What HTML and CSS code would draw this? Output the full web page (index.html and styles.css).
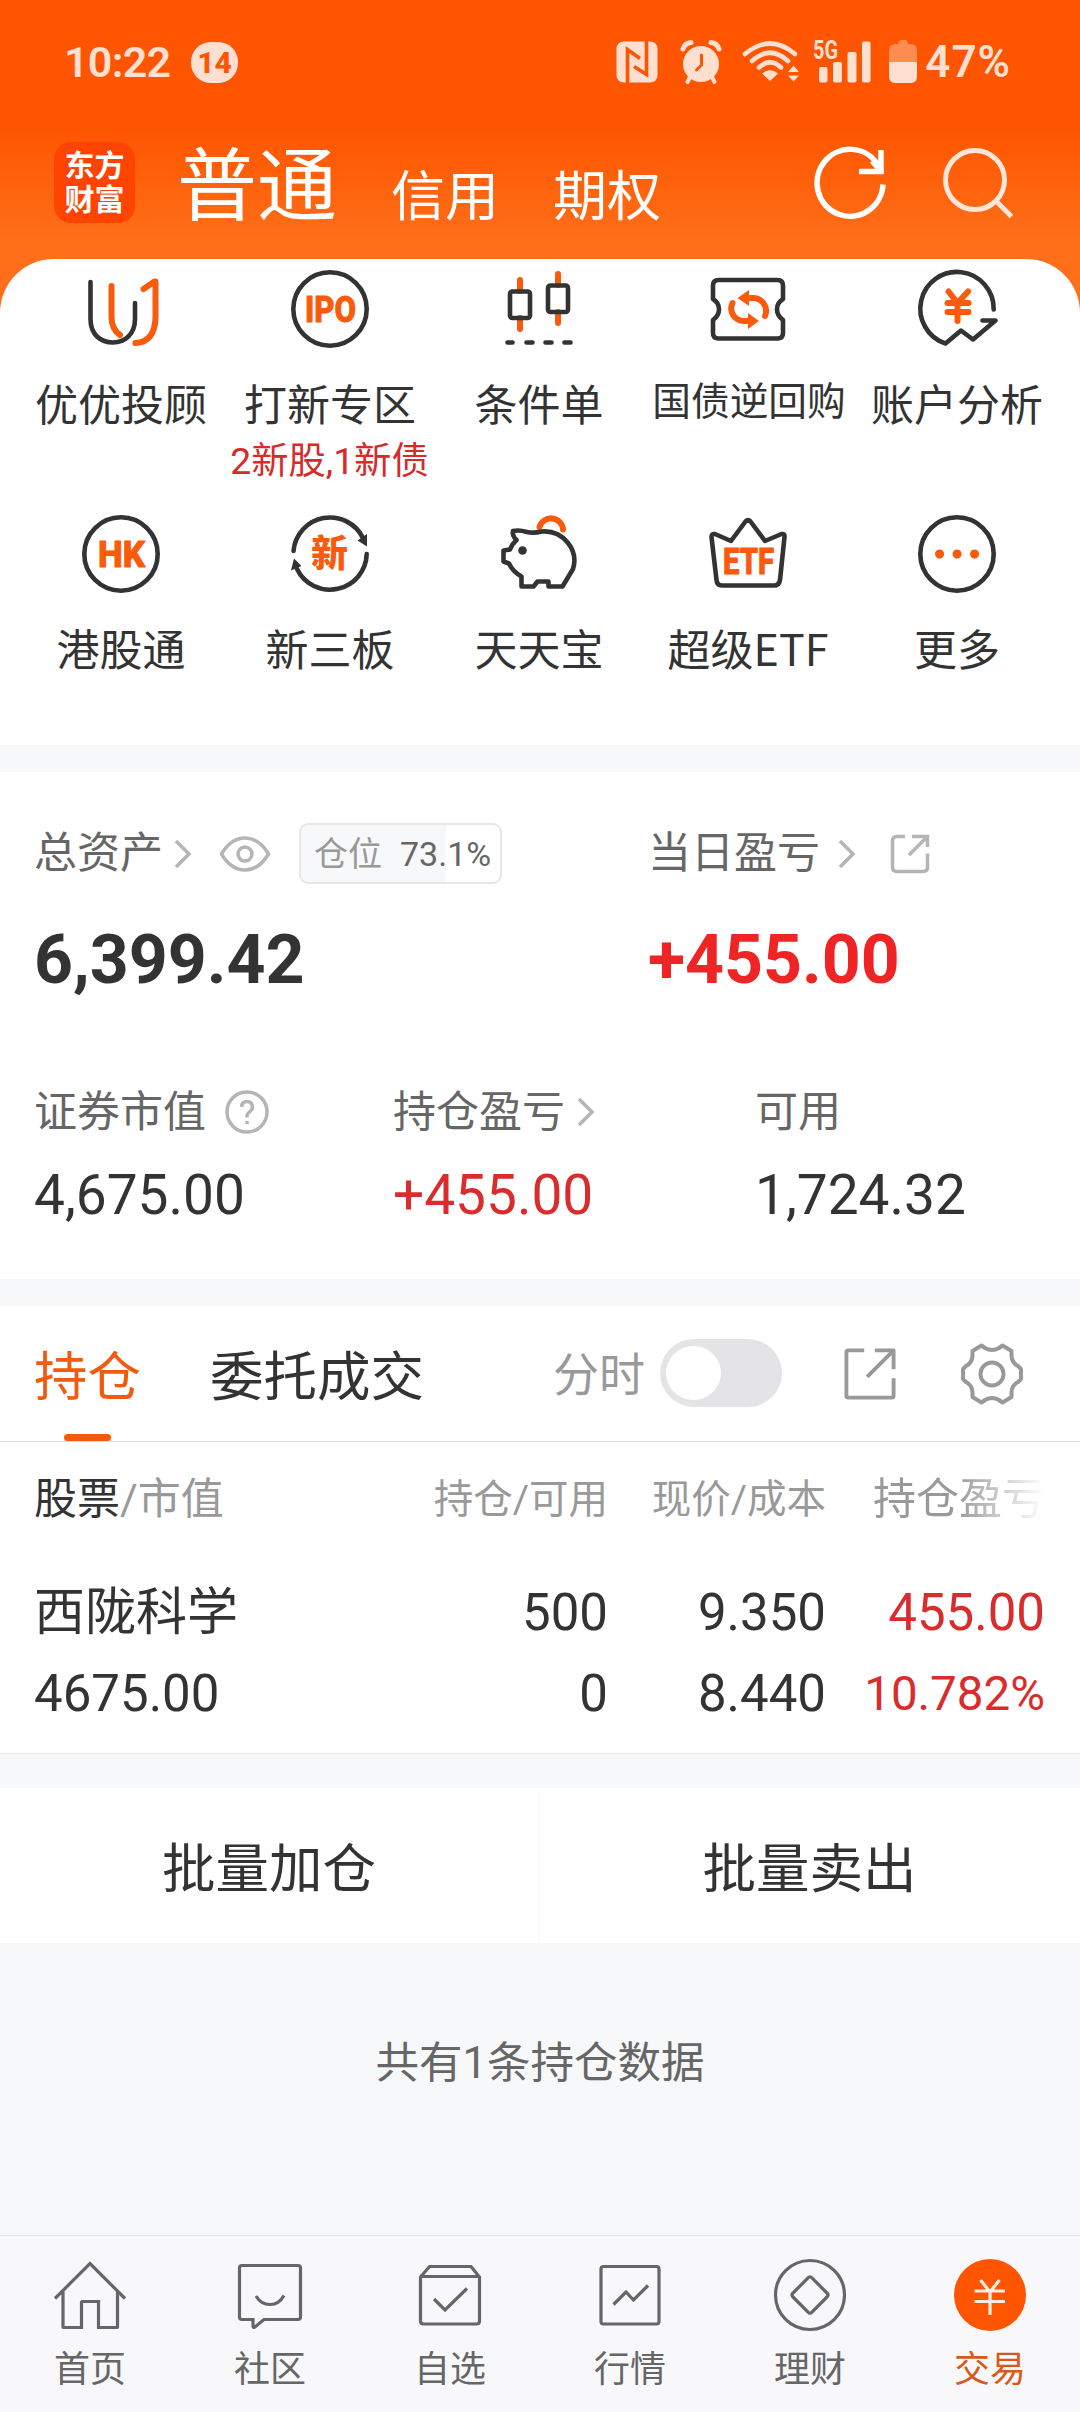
FILE: index.html
```html
<!DOCTYPE html>
<html lang="zh-CN">
  <head>
    <meta charset="UTF-8" />
    <meta name="viewport" content="width=device-width, initial-scale=1.0" />
    <title>交易</title>
    <link rel="stylesheet" href="styles.css">
  </head>

  <body>
    <div class="top">
      <div class="status">
        <span class="time">10:22</span>
        <span class="count">14</span>
        <div class="status-icons">
          <svg class="nfc" width="42" height="42" viewBox="0 0 42 42">
            <rect x="0.5" y="0.5" width="41" height="41" rx="7" fill="#ffdfd0" />
            <path d="M11.5 42V8.5L24 17.5M30.5 0V33.5L18 25.500" fill="none" stroke="#ff5500" stroke-width="3.6" />
          </svg>
          <svg class="alarm" width="42" height="44" viewBox="0 0 42 44">
            <circle cx="21" cy="24" r="18" fill="#ffdfd0" />
            <path d="M3 9Q5 3 11 2.500M39 9Q37 3 31 2.500" fill="none" stroke="#ffdfd0" stroke-width="5" stroke-linecap="round" />
            <path d="M10 37L7.500 42M32 37L34.500 42" stroke="#ffdfd0" stroke-width="4" stroke-linecap="round" />
            <path d="M21.500 15V25L16.500 30" fill="none" stroke="#ff5500" stroke-width="3" stroke-linecap="round" />
          </svg>
          <svg class="wifi" width="58" height="44" viewBox="0 0 58 44">
            <g fill="none" stroke="#ffdfd0" stroke-width="4.600" stroke-linecap="round">
              <path d="M3 14Q28 -7 53 14" />
              <path d="M10 21Q28 4.500 46 21" />
              <path d="M17 27.500Q28 17 39 27.500" />
            </g>
            <path d="M20 33.500Q28 27 36 33.500L28 41Z" fill="#ffdfd0" />
            <path d="M46 32L51.500 25.500L57 32ZM46 35.500L51.500 41.500L57 35.500Z" fill="#ffdfd0" />
          </svg>
          <svg class="signal" width="60" height="44" viewBox="0 0 60 44">
            <text x="0" y="19" class="g5" textLength="25" lengthAdjust="spacingAndGlyphs">5G</text>
            <g fill="#ffdfd0">
              <rect x="6" y="27" width="8.500" height="15.500" rx="2" />
              <rect x="20" y="22" width="9" height="20.500" rx="2" />
              <rect x="34.500" y="12" width="9" height="30.500" rx="2" />
              <rect x="49" y="1.500" width="8.500" height="41" rx="2" />
            </g>
          </svg>
          <svg class="battery" width="28" height="44" viewBox="0 0 28 44">
            <path d="M0 23V11Q0 4 6 4H9Q9 0 13 0H15Q19 0 19 4H22Q28 4 28 11V23Z" fill="#ff8c50" />
            <path d="M0 22H28V36Q28 43 22 43H6Q0 43 0 36Z" fill="#ffdfd0" />
          </svg>
          <span class="percent">47%</span>
        </div>
      </div>

      <header>
        <div class="logo"><span>东方</span><span>财富</span></div>
        <nav class="accounts">
          <a class="current">普通</a>
          <a>信用</a>
          <a>期权</a>
        </nav>
        <svg class="refresh" width="76" height="76" viewBox="0 0 76 76" fill="none" stroke="#fff" stroke-width="5.500">
          <path d="M71 38.500A33 33.500 0 1 1 66 19" />
          <path d="M69 4V25.500H47M69 25L60 15" />
        </svg>
        <svg class="search" width="76" height="76" viewBox="0 0 76 76" fill="none" stroke="#ffe6d8" stroke-width="5">
          <circle cx="35" cy="34" r="29.500" />
          <path d="M56 55L71.500 70.500" />
        </svg>
      </header>

      <!-- genveje -->
      <section class="shortcuts">
        <a>
          <svg width="84" height="84" viewBox="0 0 84 84">
            <path class="dark" d="M11.500 15V52C11.500 68 22 75.500 34 75.500C46 75.500 56 67 56 52V36" />
            <path class="hot" d="M32.500 19V50Q32.500 62 41 68" />
            <path class="hot" d="M64.500 22L75.500 14.500H76.500V50Q76 75 56.500 76" />
          </svg>
          <span>优优投顾</span>
        </a>
        <a>
          <svg width="84" height="84" viewBox="0 0 84 84">
            <circle class="dark" cx="42" cy="42" r="36.700" />
            <text x="17" y="54.500" class="label" textLength="51" lengthAdjust="spacingAndGlyphs">IPO</text>
          </svg>
          <span>打新专区</span>
          <small>2新股,1新债</small>
        </a>
        <a>
          <svg width="84" height="84" viewBox="0 0 84 84">
            <path class="hot" d="M23 13V24M23 51V62M61 7V18M61 45V56" />
            <rect class="dark" x="13" y="24.500" width="20" height="26.500" rx="2.500" />
            <rect class="dark" x="51" y="18.500" width="20" height="26.500" rx="2.500" />
            <path class="dark" d="M10.500 75.500H15.500M29.500 75.500H35.500M48.500 75.500H54.500M67.500 75.500H73.500" />
          </svg>
          <span>条件单</span>
        </a>
        <a>
          <svg width="84" height="84" viewBox="0 0 84 84">
            <path class="dark" d="M12.500 13H71.500Q77 13 77 18.500V32C69 37 69 47 77 53V66Q77 71.500 71.500 71.500H12.500Q7 71.500 7 66V53C15 47 15 37 7 32V18.500Q7 13 12.500 13Z" />
            <path class="hot" d="M59 49C63 39 55 31 47 31H41M26.500 36C22 46 30 54 38 54H43" />
            <path class="tip" d="M31.500 31L43 23V39ZM53 54L42 46V62Z" />
          </svg>
          <span class="tight">国债逆回购</span>
        </a>
        <a>
          <svg width="84" height="84" viewBox="0 0 84 84">
            <path class="dark" d="M78.700 42.500A36.700 36.700 0 1 0 30.500 76.500L46 63.500L58 72.500L80.500 53.500H67.500" />
            <path class="hot" d="M33.500 24.500L42.500 36L53 24.500M32.500 36H53.500M32.500 45H53.500M42.500 36V54" />
          </svg>
          <span>账户分析</span>
        </a>
        <a>
          <svg width="84" height="84" viewBox="0 0 84 84">
            <circle class="dark" cx="42" cy="42" r="36.700" />
            <text x="19" y="54.500" class="label" textLength="47" lengthAdjust="spacingAndGlyphs">HK</text>
          </svg>
          <span>港股通</span>
        </a>
        <a>
          <svg width="84" height="84" viewBox="0 0 84 84">
            <path class="dark" d="M5.500 39A36.700 36.700 0 0 1 75 26M78.700 42A36.700 36.700 0 0 1 9 57" />
            <path class="ink" d="M79 22L69.500 28.500L79 34.500ZM3 58.500L6 46.500L13.500 54Z" />
            <text x="23" y="55" class="xin">新</text>
          </svg>
          <span>新三板</span>
        </a>
        <a>
          <svg width="84" height="84" viewBox="0 0 84 84">
            <path class="hot" d="M42.500 15A12 12 0 0 1 66 17.500" />
            <path class="dark" d="M30 20Q22 17.500 16 19Q15 24 19.500 28Q15 32 13 37.500L6.500 38.500V49.500L12 51.500Q16 60 24.500 64.500V74.500H36.500L40.500 69.500H51.500V74.500H65.500L76 57C82 38 66 18 45 19.500Q36 21.500 30 20Z" />
            <circle class="ink" cx="25.500" cy="38.500" r="4.300" />
          </svg>
          <span>天天宝</span>
        </a>
        <a>
          <svg width="84" height="84" viewBox="0 0 84 84">
            <path class="dark" d="M25 29L39.500 9.500Q42 7 44.500 9.500L59 29L75.500 22Q79 21.500 78.500 25L74 68Q73 73.500 68 73.500H16Q11 73.500 10.500 68L5.500 25Q5.500 21.500 9 22Z" />
            <text x="17" y="61.500" class="label" textLength="51" lengthAdjust="spacingAndGlyphs">ETF</text>
          </svg>
          <span class="noto">超级ETF</span>
        </a>
        <a>
          <svg width="84" height="84" viewBox="0 0 84 84">
            <circle class="dark" cx="42" cy="42" r="36.700" />
            <path class="tip" d="M24.500 37.500a4.500 4.500 0 1 0 .1 0ZM42 37.500a4.500 4.500 0 1 0 .1 0ZM59.500 37.500a4.500 4.500 0 1 0 .1 0Z" />
          </svg>
          <span>更多</span>
        </a>
      </section>
    </div>

    <section class="assets">
      <div class="totals">
        <div>
          <div class="title">
            <span>总资产</span>
            <svg class="chevron" width="18" height="30" viewBox="0 0 18 30"><path d="M2 2L15 15L2 28" /></svg>
            <svg class="eye" width="52" height="38" viewBox="0 0 52 38">
              <path d="M2.500 19Q12 3 26 3T49.500 19Q40 35 26 35T2.500 19Z" />
              <circle cx="26" cy="19" r="7" />
            </svg>
            <span class="position"><em>仓位</em>73.1%</span>
          </div>
          <strong>6,399.42</strong>
        </div>
        <div>
          <div class="title">
            <span>当日盈亏</span>
            <svg class="chevron far" width="18" height="30" viewBox="0 0 18 30"><path d="M2 2L15 15L2 28" /></svg>
            <svg class="share" width="40" height="40" viewBox="0 0 40 40">
              <path d="M15 2.500H7Q2.500 2.500 2.500 7V33Q2.500 37.500 7 37.500H33Q37.500 37.500 37.500 33V19.500M22 2.500H37.500V13M37 3L19 21" />
            </svg>
          </div>
          <strong class="up">+455.00</strong>
        </div>
      </div>
      <div class="details">
        <div>
          <p><span>证券市值</span>
            <svg class="help" width="44" height="44" viewBox="0 0 44 44">
              <circle cx="22" cy="22" r="20" />
              <path d="M16.500 17Q17 11.500 22 11.500T27.500 17Q27.500 19.500 24.500 22T22 26.500V27.500M22 31V34" />
            </svg>
          </p>
          <b>4,675.00</b>
        </div>
        <div>
          <p><span>持仓盈亏</span>
            <svg class="chevron near" width="18" height="30" viewBox="0 0 18 30"><path d="M2 2L15 15L2 28" /></svg>
          </p>
          <b class="up">+455.00</b>
        </div>
        <div>
          <p><span>可用</span></p>
          <b>1,724.32</b>
        </div>
      </div>
    </section>

    <section class="holdings">
      <div class="tabs">
        <a class="valgt">持仓</a>
        <a>委托成交</a>
        <span class="minute">分时</span>
        <span class="toggle"></span>
        <svg class="export" width="52" height="52" viewBox="0 0 54 54">
          <path d="M21 2.500H4.500Q2.500 2.500 2.500 4.500V49.500Q2.500 51.500 4.500 51.500H49.500Q51.500 51.500 51.500 49.500V31.500M32 2.500H51.500V22M51 3L24 30" />
        </svg>
        <svg class="gear" width="62" height="62" viewBox="0 0 62 62">
          <path d="M20.500 2.500L24 5Q31 9 38 5L41.500 2.500L50.500 8V13Q51 20 57 23L60 26V36L57 39Q51 42 50.500 49V54L41.500 59.500L38 57Q31 53 24 57L20.500 59.500L11.500 54V49Q11 42 5 39L2 36V26L5 23Q11 20 11.500 13V8Z" />
          <circle cx="31" cy="31" r="11.500" />
        </svg>
      </div>
      <div class="table">
        <div class="row head">
          <span><i>股票</i>/市值</span>
          <span class="small">持仓/可用</span>
          <span class="small">现价/成本</span>
          <span class="fade">持仓盈亏</span>
        </div>
        <div class="row first">
          <span>西陇科学</span>
          <span>500</span>
          <span>9.350</span>
          <span class="up">455.00</span>
        </div>
        <div class="row">
          <span>4675.00</span>
          <span>0</span>
          <span>8.440</span>
          <span class="up rate">10.782%</span>
        </div>
      </div>
    </section>

    <div class="batch">
      <button>批量加仓</button>
      <button>批量卖出</button>
    </div>

    <p class="total">共有1条持仓数据</p>

    <footer>
      <a>
        <svg width="80" height="80" viewBox="0 0 80 80">
          <path d="M5 43.500L40 8.500L75 43.500M13 36.500V71.500Q13 72.500 14 72.500H31.500V47.500Q31.500 46.500 32.500 46.500H48.500V72.500H66.500Q67.500 72.500 67.500 71.500V36.500" />
        </svg>
        首页
      </a>
      <a>
        <svg width="80" height="80" viewBox="0 0 80 80">
          <path d="M12 10.500H68Q70.500 10.500 70.500 13V62Q70.500 64.500 68 64.500H34L25 72Q23 73 23 71V64.500H12Q9.500 64.500 9.500 62V13Q9.500 10.500 12 10.500Z" />
          <path d="M26 41Q31 49.500 40 49.500T54 40.500" />
        </svg>
        社区
      </a>
      <a>
        <svg width="80" height="80" viewBox="0 0 80 80">
          <path d="M10.500 22L19.500 11.500H61L69.500 22V66Q69.500 69 66.500 69H13.500Q10.500 69 10.500 66ZM10.500 21.500H69.500M24 44L35 55L57 33.500" />
        </svg>
        自选
      </a>
      <a>
        <svg width="80" height="80" viewBox="0 0 80 80">
          <rect x="11" y="11.500" width="58" height="57.500" rx="2.500" />
          <path d="M23.500 49.500L36 37L43.500 45L58 30.500" />
        </svg>
        行情
      </a>
      <a>
        <svg width="80" height="80" viewBox="0 0 80 80">
          <circle cx="40" cy="40" r="34.500" />
          <path d="M38 23Q40 20.500 42 23L57 38Q59 40 57 42L42 57Q40 59.500 38 57L23 42Q21 40 23 38Z" />
        </svg>
        理财
      </a>
      <a class="active">
        <svg width="80" height="80" viewBox="0 0 80 80">
          <circle class="coin" cx="40" cy="40" r="36" />
          <path class="yen" d="M30.500 25L40 37L49.500 25M24.500 36H55M24.500 46.500H55M40 36V60" />
        </svg>
        交易
      </a>
    </footer>
  </body>
</html>
```

FILE: styles.css
```css
* {
  box-sizing: border-box;
}

body {
  margin: 0;
  width: 1080px;
  height: 2412px;
  display: flex;
  flex-direction: column;
  background-color: #f7f8fa;
  color: #333;
  font-family: Roboto, "Noto Sans CJK SC", sans-serif;
  font-size: 43px;
  font-weight: 400;
}

svg {
  flex: none;
  display: block;
  overflow: visible;
}

p {
  margin: 0;
}

/* orange top */
.top {
  background: linear-gradient(#ff5500 125px, #ff6f19 245px);
}

.status {
  height: 124px;
  padding: 38px 69px 38px 64px;
  display: flex;
  align-items: center;
  color: #ffdfd0;
}

.time {
  font-size: 43px;
  font-weight: 600;
  letter-spacing: -0.7px;
  width: 127px;
}

.count {
  width: 47px;
  height: 41px;
  border-radius: 20px;
  background-color: #ffdfd0;
  color: #ff5500;
  font-size: 30px;
  line-height: 42px;
  font-weight: 800;
  text-align: center;
}

.status-icons {
  display: flex;
  align-items: center;
  margin-left: auto;
}

.alarm {
  margin-left: 22px;
}

.wifi {
  margin-left: 20px;
}

.signal {
  margin-left: 13px;
}

.g5 {
  font-size: 25px;
  font-weight: 700;
  fill: #ffdfd0;
}

.battery {
  margin-left: 16px;
}

.percent {
  font-size: 44px;
  line-height: 48px;
  font-weight: 600;
  letter-spacing: 1px;
  margin-left: 8px;
}

header {
  height: 135px;
  padding: 0 64px 0 54px;
  display: flex;
  color: #fff;
}

.logo {
  width: 81px;
  height: 81px;
  margin-top: 18px;
  border-radius: 17px;
  background-color: #ff4300;
  display: flex;
  flex-direction: column;
  align-items: center;
  justify-content: center;
  font-size: 30px;
  line-height: 34px;
  font-weight: 700;
}

.accounts {
  display: flex;
  align-items: baseline;
  gap: 54px;
  margin-left: 42px;
  font-size: 54px;
  line-height: 100px;
}

.accounts .current {
  font-size: 80px;
  margin-top: 13px;
}

.accounts a:not(.current) {
  position: relative;
  top: 2px;
}

.refresh {
  margin: 22px 0 0 auto;
}

.search {
  margin: 22px 0 0 52px;
}

.shortcuts {
  height: 486px;
  padding: 8px 17px 0 16px;
  border-radius: 54px 54px 0 0;
  background-color: #fff;
  display: grid;
  grid-template-columns: repeat(5, 209px);
  grid-template-rows: 245px 200px;
}

.shortcuts a {
  display: flex;
  flex-direction: column;
  align-items: center;
  white-space: nowrap;
}

.shortcuts span {
  margin-top: 25px;
  padding-left: 1px;
  line-height: 60px;
}

.shortcuts .tight {
  font-size: 38.7px;
  margin-top: 21px;
  padding-left: 3px;
}

.shortcuts .noto {
  font-family: "Noto Sans CJK SC", sans-serif;
  margin-top: 21px;
}

.shortcuts small {
  font-size: 37.3px;
  line-height: 50px;
  color: #d52b2b;
}

.dark {
  fill: none;
  stroke: #333;
  stroke-width: 4.6;
  stroke-linecap: round;
  stroke-linejoin: round;
}

.hot {
  fill: none;
  stroke: #f95a0c;
  stroke-width: 6;
  stroke-linecap: round;
  stroke-linejoin: round;
}

.ink {
  fill: #333;
}

.tip {
  fill: #f95a0c;
}

.label,
.xin {
  fill: #f95a0c;
  stroke: #f95a0c;
  stroke-width: 1;
  stroke-linejoin: round;
  font-size: 36px;
  font-weight: 800;
}

.xin {
  font-size: 37px;
  stroke: none;
}

/* assets */
.assets {
  height: 507px;
  margin-top: 27px;
  padding: 51px 35px 0 34px;
  background-color: #fff;
}

.totals {
  display: grid;
  grid-template-columns: 614px 1fr;
}

.title {
  display: flex;
  align-items: center;
  height: 61px;
  line-height: 61px;
  color: #666;
}

.totals strong {
  display: block;
  margin-top: 36px;
  font-size: 68px;
  line-height: 80px;
  font-weight: 700;
}

.totals .up {
  color: #ee2425;
}

.chevron,
.eye,
.share,
.help {
  fill: none;
  stroke: #b5b5b5;
  stroke-width: 3.5;
}

.chevron {
  margin-left: 11px;
}

.far {
  margin-left: 18px;
}

.near {
  margin-left: 12px;
}

.eye {
  margin-left: 27px;
}

.share {
  margin-left: 34px;
}

.help {
  margin-left: 19px;
}

.position {
  width: 203px;
  height: 61px;
  margin-left: 28px;
  padding-left: 13px;
  border: 2px solid #e6e7e9;
  border-radius: 9px;
  background: linear-gradient(90deg, #f7f8fa 73.1%, #fff 73.1%);
  font-size: 34px;
  line-height: 58px;
}

.position em {
  font-style: normal;
  color: #999;
  margin-right: 18px;
}

.details {
  display: grid;
  grid-template-columns: 359px 362px 1fr;
  margin-top: 87px;
}

.details p {
  display: flex;
  align-items: center;
  height: 50px;
  line-height: 50px;
  color: #666;
}

.details b {
  display: block;
  margin-top: 28px;
  font-size: 55px;
  line-height: 60px;
  font-weight: 400;
}

.up {
  color: #d92c2c;
}

/* holdings */
.holdings {
  height: 448px;
  margin-top: 27px;
  background-color: #fff;
  border-bottom: 1px solid #ebebeb;
}

.tabs {
  height: 136px;
  padding: 0 57px 0 34px;
  border-bottom: 1px solid #dcdcdc;
  display: flex;
  align-items: center;
  font-size: 53.5px;
}

.tabs a {
  height: 135px;
  line-height: 143px;
  margin-right: 69px;
}

.tabs .valgt {
  color: #f25a0f;
  display: flex;
  flex-direction: column;
  align-items: center;
}

.tabs .valgt::after {
  content: "";
  width: 47px;
  height: 7px;
  margin-top: -15px;
  border-radius: 4px;
  background-color: #f25a0f;
}

.minute {
  font-size: 46px;
  line-height: 60px;
  color: #999;
  margin-left: auto;
  padding-top: 3px;
}

.toggle {
  width: 122px;
  height: 68px;
  margin: -1px 62px 0 15px;
  padding: 7px 6px;
  border-radius: 34px;
  background-color: #e4e4e6;
}

.toggle::before {
  content: "";
  display: block;
  width: 55px;
  height: 54px;
  border-radius: 50%;
  background-color: #fff;
}

.export,
.gear {
  fill: none;
  stroke: #999;
  stroke-width: 4;
  stroke-linejoin: round;
}

.export {
  margin-right: 65px;
}

.table {
  padding: 22px 0 0 34px;
}

.row {
  display: grid;
  grid-template-columns: 355px 219px 218px 219px;
  height: 80px;
  font-size: 51px;
  line-height: 82px;
}

.row span {
  text-align: right;
  white-space: nowrap;
}

.row span:first-child {
  text-align: left;
}

.row.head {
  height: 68px;
  line-height: 71px;
  font-size: 43px;
  color: #999;
}

.head i {
  font-style: normal;
  color: #333;
}

.head .small {
  font-size: 39.5px;
}

.head .fade {
  margin-left: 40px;
  mask-image: linear-gradient(90deg, #000 50%, transparent 100%);
  -webkit-mask-image: linear-gradient(90deg, #000 50%, transparent 100%);
}

.row.first {
  margin-top: 40px;
  height: 81px;
}

.row .rate {
  font-size: 47.5px;
}

/* batch buttons */
.batch {
  height: 155px;
  margin-top: 34px;
  display: grid;
  grid-template-columns: 539px 540px;
  gap: 1px;
}

.batch button {
  border: 0;
  background-color: #fff;
  color: #333;
  font: inherit;
  font-size: 53.5px;
  line-height: 80px;
  padding: 8px 1px 0 0;
}

.total {
  margin-top: 91px;
  font-size: 43.5px;
  line-height: 60px;
  text-align: center;
  color: #666;
}

footer {
  height: 177px;
  margin-top: auto;
  padding-top: 19px;
  border-top: 1px solid #e2e4e6;
  background-color: #f8f8fa;
  display: grid;
  grid-template-columns: repeat(6, 1fr);
}

footer a {
  display: flex;
  flex-direction: column;
  align-items: center;
  font-size: 36px;
  line-height: 70px;
  color: #666;
}

footer svg {
  fill: none;
  stroke: #666;
  stroke-width: 3.2;
}

footer .active {
  color: #d9591c;
}

footer .coin {
  fill: #ff5500;
  stroke: none;
}

footer .yen {
  stroke: #ffece2;
}
```
